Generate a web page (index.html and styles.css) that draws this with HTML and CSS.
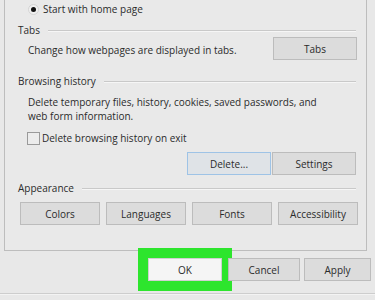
FILE: index.html
```html
<!DOCTYPE html>
<html lang="en">
<head>
<meta charset="utf-8">
<title>Internet Options</title>
<link rel="stylesheet" href="styles.css">
</head>
<body>
<div class="dialog">
  <div class="panel">
    <div class="radio-row"><span class="radio"><span class="dot"></span></span><span>Start with home page</span></div>

    <section class="group">
      <div class="legend"><span>Tabs</span></div>
      <div class="tabs-row">
        <p class="text">Change how webpages are displayed in tabs.</p>
        <button class="btn btn-tabs">Tabs</button>
      </div>
    </section>

    <section class="group group-history">
      <div class="legend"><span>Browsing history</span></div>
      <p class="text desc">Delete temporary files, history, cookies, saved passwords, and<br>web form information.</p>
      <div class="check-row"><span class="checkbox"></span><span>Delete browsing history on exit</span></div>
      <div class="btn-row">
        <button class="btn btn-wide btn-default">Delete...</button>
        <button class="btn btn-wide">Settings</button>
      </div>
    </section>

    <section class="group group-appearance">
      <div class="legend"><span>Appearance</span></div>
      <div class="grid4">
        <button class="btn">Colors</button>
        <button class="btn">Languages</button>
        <button class="btn">Fonts</button>
        <button class="btn">Accessibility</button>
      </div>
    </section>
  </div>

  <div class="actions">
    <button class="btn btn-action btn-ok">OK</button>
    <button class="btn btn-action btn-cancel">Cancel</button>
    <button class="btn btn-action btn-apply">Apply</button>
  </div>
  <div class="footer-line"></div>
</div>
</body>
</html>
```

FILE: styles.css
```css
* { box-sizing: border-box; }
html, body { margin: 0; padding: 0; }
body {
  width: 375px;
  height: 300px;
  overflow: hidden;
  background: #e8e8e8;
  font-family: "Open Sans", "Noto Sans", sans-serif;
  font-size: 10px;
  color: #2b2b2b;
}
.dialog {
  width: 375px;
  height: 300px;
}
.panel {
  margin-left: 4px;
  width: 363px;
  height: 251px;
  border: 1px solid #bdbdbd;
  border-top: none;
  padding: 0 10px 0 13px;
  background: #e9e9e9;
}
.radio-row {
  height: 18px;
  display: flex;
  align-items: center;
  padding-left: 10px;
  gap: 4px;
}
.radio {
  width: 11px;
  height: 11px;
  border-radius: 50%;
  border: 1px solid #d4d4d4;
  background: #f0f0f0;
  display: flex;
  align-items: center;
  justify-content: center;
}
.dot {
  width: 5px;
  height: 5px;
  border-radius: 50%;
  background: #111;
}
.legend {
  height: 14px;
  display: flex;
  align-items: center;
  gap: 8px;
}
.legend::after {
  content: "";
  flex: 1;
  height: 1px;
  background: #c9c9c9;
  box-shadow: 0 1px 0 #f6f6f6;
}
.group { margin-top: 5px; }
.group-history { margin-top: 14px; }
.group-appearance { margin-top: 6px; }
.text { margin: 0; line-height: 14px; }
.tabs-row {
  height: 23px;
  display: flex;
  align-items: center;
  justify-content: space-between;
  padding-left: 10px;
  margin-right: -1px;
}
.tabs-row .text { padding-top: 3px; }
.desc { margin-top: 7px; padding-left: 10px; }
.check-row {
  margin-top: 8px;
  height: 14px;
  display: flex;
  align-items: center;
  gap: 2px;
  padding-left: 9px;
}
.checkbox {
  width: 13px;
  height: 13px;
  border: 1px solid #9a9a9a;
  background: #ececec;
}
.btn {
  font-family: inherit;
  font-size: 10px;
  color: #2b2b2b;
  height: 23px;
  padding: 0;
  background: #dcdcdc;
  border: 1px solid #bcbcbc;
  border-radius: 0;
}
.btn-tabs { width: 84px; }
.btn-row {
  margin-top: 7px;
  display: flex;
  justify-content: flex-end;
  gap: 1px;
}
.btn-wide { width: 84px; }
.btn-default {
  border-color: #9ec3e6;
  background: #dfe3e7;
}
.grid4 {
  margin-top: 7px;
  margin-left: 2px;
  margin-right: -2px;
  display: grid;
  grid-template-columns: repeat(4, 1fr);
  gap: 6px;
}
.actions {
  margin-top: 7px;
  display: flex;
  gap: 4px;
  padding-left: 148px;
}
.btn-action { width: 74px; flex: none; }
.btn-cancel { width: 72px; }
.btn-apply { width: 67px; }
.btn-ok {
  background: #f5f5f5;
  border-color: #d0d0d0;
  outline: 10px solid #2de52d;
  margin-right: 2px;
}
.footer-line {
  margin-top: 12px;
  height: 1px;
  background: #cdcdcd;
  box-shadow: 0 1px 0 #f3f3f3;
}
```
